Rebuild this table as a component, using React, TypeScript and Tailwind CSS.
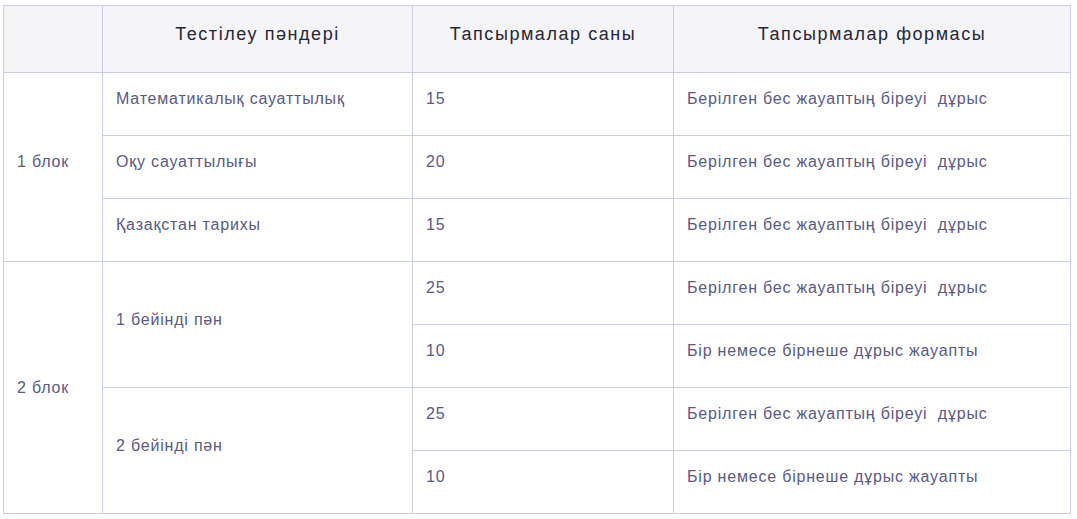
const rows: { block?: { label: string; span: number; extra?: string }; subject?: { label: string; span: number }; count: string; form: string }[] = [
  { block: { label: "1 блок", span: 3 }, subject: { label: "Математикалық сауаттылық", span: 1 }, count: "15", form: "Берілген бес жауаптың біреуі  дұрыс" },
  { subject: { label: "Оқу сауаттылығы", span: 1 }, count: "20", form: "Берілген бес жауаптың біреуі  дұрыс" },
  { subject: { label: "Қазақстан тарихы", span: 1 }, count: "15", form: "Берілген бес жауаптың біреуі  дұрыс" },
  { block: { label: "2 блок", span: 4, extra: " pt-[25px]" }, subject: { label: "1 бейінді пән", span: 2 }, count: "25", form: "Берілген бес жауаптың біреуі  дұрыс" },
  { count: "10", form: "Бір немесе бірнеше дұрыс жауапты" },
  { subject: { label: "2 бейінді пән", span: 2 }, count: "25", form: "Берілген бес жауаптың біреуі  дұрыс" },
  { count: "10", form: "Бір немесе бірнеше дұрыс жауапты" },
];

const cell = "border border-[#c8cde8] px-[13px] py-[15px] align-middle";
const txt = "mb-[10px] whitespace-pre leading-[22px] tracking-[0.8px]";
const head = "mb-[10px] leading-[26px] tracking-[1.55px]";

export default function App() {
  return (
    <div className="min-h-screen bg-white pl-[3px] pt-[5px] [font-family:'Liberation_Sans',Arial,sans-serif]">
      <table className="w-[1067px] table-fixed border-collapse">
        <colgroup>
          <col className="w-[99px]" />
          <col className="w-[310px]" />
          <col className="w-[261px]" />
          <col className="w-[397px]" />
        </colgroup>
        <thead>
          <tr className="bg-[#f5f5f7] text-[18px] text-[#26263a]">
            <th className={cell + " font-normal"}><p className={head}>&nbsp;</p></th>
            <th className={cell + " text-center font-normal"}><p className={head}>Тестілеу пәндері</p></th>
            <th className={cell + " text-center font-normal"}><p className={head}>Тапсырмалар саны</p></th>
            <th className={cell + " text-center font-normal"}><p className={head}>Тапсырмалар формасы</p></th>
          </tr>
        </thead>
        <tbody className="text-[16px] text-[#5a5a86]">
          {rows.map((r, i) => (
            <tr key={i}>
              {r.block && (
                <td rowSpan={r.block.span} className={cell + (r.block.extra ?? "")}>
                  <p className={txt}>{r.block.label}</p>
                </td>
              )}
              {r.subject && (
                <td rowSpan={r.subject.span} className={cell}>
                  <p className={txt}>{r.subject.label}</p>
                </td>
              )}
              <td className={cell}>
                <p className={txt}>{r.count}</p>
              </td>
              <td className={cell}>
                <p className={txt}>{r.form}</p>
              </td>
            </tr>
          ))}
        </tbody>
      </table>
    </div>
  );
}
